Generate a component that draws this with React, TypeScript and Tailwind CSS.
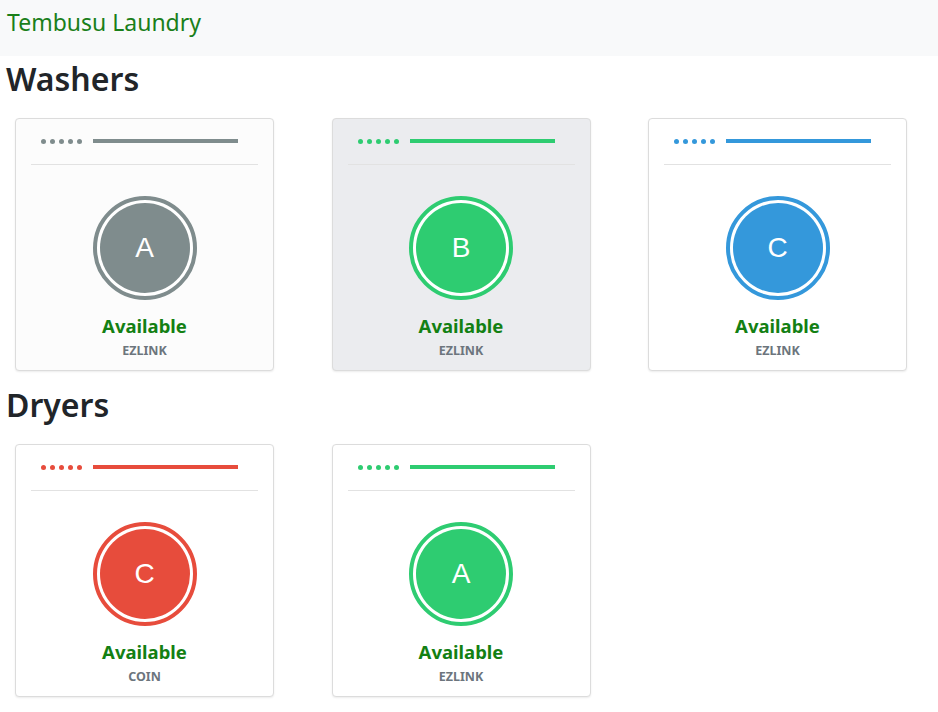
import React from 'react'

type Machine = {
  label: string
  color: string
  payment: string
  bg?: string
}

const washers: Machine[] = [
  { label: 'A', color: '#7f8c8d', payment: 'EZLINK', bg: 'bg-[#fcfcfc]' },
  { label: 'B', color: '#2ecc71', payment: 'EZLINK', bg: 'bg-[#ebecef]' },
  { label: 'C', color: '#3498db', payment: 'EZLINK', bg: 'bg-white' },
]

const dryers: Machine[] = [
  { label: 'C', color: '#e74c3c', payment: 'COIN', bg: 'bg-white' },
  { label: 'A', color: '#2ecc71', payment: 'EZLINK', bg: 'bg-white' },
]

function MachineCard({ label, color, payment, bg }: Machine) {
  return (
    <div
      className={`flex h-[253px] w-[259px] flex-col rounded-[4px] border border-[#dcdcdc] px-[15px] shadow-[0_1px_2px_rgba(0,0,0,0.08)] ${bg}`}
    >
      <div className="flex h-[46px] items-center gap-[11px] border-b border-[#e2e2e2] pl-[10px] pb-[1px]">
        <div className="flex gap-[4px]">
          {[0, 1, 2, 3, 4].map((i) => (
            <span key={i} className="h-[5px] w-[5px] rounded-full" style={{ backgroundColor: color }} />
          ))}
        </div>
        <div className="h-[4px] w-[145px]" style={{ backgroundColor: color }} />
      </div>
      <div className="flex flex-1 flex-col items-center pt-[31px]">
        <div
          className="flex h-[104px] w-[104px] items-center justify-center rounded-full border-[4px] bg-white p-[3px]"
          style={{ borderColor: color }}
        >
          <div
            className="flex h-full w-full items-center justify-center rounded-full font-['Liberation_Sans',Arial,sans-serif] text-[28px] text-white"
            style={{ backgroundColor: color }}
          >
            {label}
          </div>
        </div>
        <div className="mt-[13px] text-[18.5px] font-bold leading-[26px] text-[#138013]">Available</div>
        <div className="mt-[3px] text-[12.5px] font-bold leading-[18px] text-[#6c757d]">{payment}</div>
      </div>
    </div>
  )
}

function Section({ title, machines }: { title: string; machines: Machine[] }) {
  return (
    <section>
      <h2 className="px-[6px] text-[32px] font-semibold leading-[40px] text-[#212529]">{title}</h2>
      <div className="mt-[19px] flex gap-[57.5px] pl-[15px]">
        {machines.map((m, i) => (
          <MachineCard key={i} {...m} />
        ))}
      </div>
    </section>
  )
}

export default function App() {
  return (
    <div className="min-h-[712px] bg-white font-['Noto_Sans','Open_Sans',sans-serif]">
      <nav className="h-[56px] bg-[#f8f9fa] px-[7px] pt-[7px]">
        <span className="text-[23px] leading-[30px] text-[#1a7f1a]">Tembusu Laundry</span>
      </nav>
      <div className="pt-[3px]">
        <Section title="Washers" machines={washers} />
        <div className="mt-[14px]">
          <Section title="Dryers" machines={dryers} />
        </div>
      </div>
    </div>
  )
}
